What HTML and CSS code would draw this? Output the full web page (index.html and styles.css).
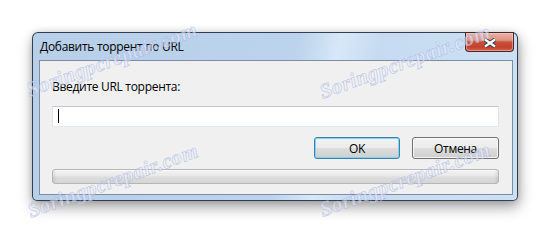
FILE: index.html
```html
<!DOCTYPE html>
<html lang="ru">
<head>
<meta charset="utf-8">
<title>Добавить торрент по URL</title>
<link rel="stylesheet" href="styles.css">
</head>
<body>
<div class="stage">
  <div class="window">
    <div class="titlebar">
      <span class="title">Добавить торрент по URL</span>
      <div class="close">
        <svg width="14" height="10" viewBox="0 0 14 10" aria-hidden="true">
          <path d="M2 1.5 L12 8.5 M12 1.5 L2 8.5" stroke="#3d3d45" stroke-width="4.2" stroke-linecap="butt" fill="none"/>
          <path d="M2 1.5 L12 8.5 M12 1.5 L2 8.5" stroke="#ffffff" stroke-width="2.2" stroke-linecap="butt" fill="none"/>
        </svg>
      </div>
    </div>
    <div class="client">
      <label class="prompt">Введите URL торрента:</label>
      <div class="input"><span class="caret"></span></div>
      <div class="buttons">
        <button class="btn btn-default">OK</button>
        <button class="btn btn-cancel">Отмена</button>
      </div>
      <div class="progress"></div>
    </div>
  </div>
  <div class="watermarks" aria-hidden="true">
    <span class="wm wm-1">Soringpcrepair.com</span>
    <span class="wm wm-2">Soringpcrepair.com</span>
    <span class="wm wm-3">Soringpcrepair.com</span>
    <span class="wm wm-4">Soringpcrepair.com</span>
  </div>
</div>
</body>
</html>
```
FILE: styles.css
```css
html, body {
  margin: 0;
  padding: 0;
  background: #ffffff;
  width: 551px;
  height: 235px;
  overflow: hidden;
}

.stage {
  position: relative;
  box-sizing: border-box;
  width: 551px;
  height: 235px;
  padding: 32px 0 0 32px;
  font-family: "Segoe UI", "Open Sans", "Noto Sans", sans-serif;
  font-size: 12px;
  letter-spacing: -0.3px;
  color: #000;
}

.window {
  box-sizing: border-box;
  width: 486px;
  height: 169px;
  border: 1px solid rgba(25, 35, 50, 0.85);
  border-radius: 6px 6px 5px 5px;
  background:
    linear-gradient(100deg, #b7cfe9 0%, #bbd3ec 52%, #d7e8f8 60%, #c6dbf1 68%, #cde1f5 100%);
  display: flex;
  flex-direction: column;
  box-shadow: 1px 6px 14px rgba(0, 0, 0, 0.38), 0 0 6px rgba(0, 0, 0, 0.12);
}

.titlebar {
  height: 27px;
  flex: none;
  display: flex;
  justify-content: space-between;
  align-items: flex-start;
  padding-left: 7px;
}

.title {
  margin-top: 6px;
  line-height: 16px;
  white-space: nowrap;
}

.close {
  box-sizing: border-box;
  width: 49px;
  height: 20px;
  margin-top: -1px;
  margin-right: 3px;
  border: 1px solid #4a2622;
  border-top-color: #3a2a2a;
  border-radius: 0 0 4px 4px;
  background: linear-gradient(#eab2a6 0%, #df9282 40%, #c9513c 50%, #c3412c 78%, #d3644e 100%);
  box-shadow: inset 0 0 0 1px rgba(255, 220, 210, 0.45);
  display: flex;
  align-items: center;
  justify-content: center;
}

.close svg {
  display: block;
  margin-top: 1px;
}

.client {
  flex: 1;
  margin: 0 4px 5px 6px;
  border: 1px solid #7d8ea4;
  background: #f0f0f0;
  padding: 18px 13px 0 12px;
  display: flex;
  flex-direction: column;
}

.prompt {
  line-height: 16px;
  white-space: nowrap;
}

.input {
  box-sizing: border-box;
  height: 21px;
  margin-top: 11px;
  background: #fff;
  border: 1px solid #e2e3ea;
  border-top-color: #c3c6cd;
  border-bottom-color: #e3e9ef;
  display: flex;
  align-items: flex-start;
}

.caret {
  width: 1px;
  height: 14px;
  margin: 2px 0 0 5px;
  background: #000;
}

.buttons {
  display: flex;
  justify-content: flex-end;
  gap: 12px;
  margin-top: 10px;
}

.btn {
  box-sizing: border-box;
  height: 22px;
  margin: 0;
  padding: 0;
  font: inherit;
  letter-spacing: inherit;
  color: #000;
  border: 1px solid #707070;
  border-radius: 3px;
  background: linear-gradient(#f2f2f2 0%, #ebebeb 50%, #dddddd 51%, #cfcfcf 100%);
  box-shadow: inset 0 0 0 1px rgba(255, 255, 255, 0.75);
  display: flex;
  align-items: center;
  justify-content: center;
}

.btn-default {
  width: 86px;
  border-color: #3c7fb1;
  box-shadow: inset 0 0 0 1px #7fd4f3;
}

.btn-cancel {
  width: 87px;
}

.progress {
  box-sizing: border-box;
  height: 15px;
  margin-top: 10px;
  border: 1px solid #b6b6b6;
  border-radius: 3px;
  background:
    linear-gradient(to right, rgba(0, 0, 0, 0.07), rgba(0, 0, 0, 0) 4px, rgba(0, 0, 0, 0) calc(100% - 4px), rgba(0, 0, 0, 0.08)),
    linear-gradient(#f3f3f3 0%, #e9e9e9 45%, #dcdcdc 55%, #d6d6d6 100%);
  box-shadow: inset 0 1px 0 rgba(255, 255, 255, 0.6);
}

.watermarks {
  position: absolute;
  inset: 0;
  pointer-events: none;
}

.wm {
  position: absolute;
  white-space: nowrap;
  font-family: "Liberation Serif", "DejaVu Serif", serif;
  font-style: italic;
  font-weight: bold;
  font-size: 21px;
  letter-spacing: 0.5px;
  color: rgba(236, 239, 250, 0.55);
  -webkit-text-stroke: 0.7px rgba(160, 172, 220, 0.55);
  transform: translate(-50%, -50%) rotate(-20deg);
}

.wm-1 { left: 112px; top: 60px; }
.wm-2 { left: 405px; top: 62px; }
.wm-3 { left: 113px; top: 181px; }
.wm-4 { left: 405px; top: 180px; }
```
